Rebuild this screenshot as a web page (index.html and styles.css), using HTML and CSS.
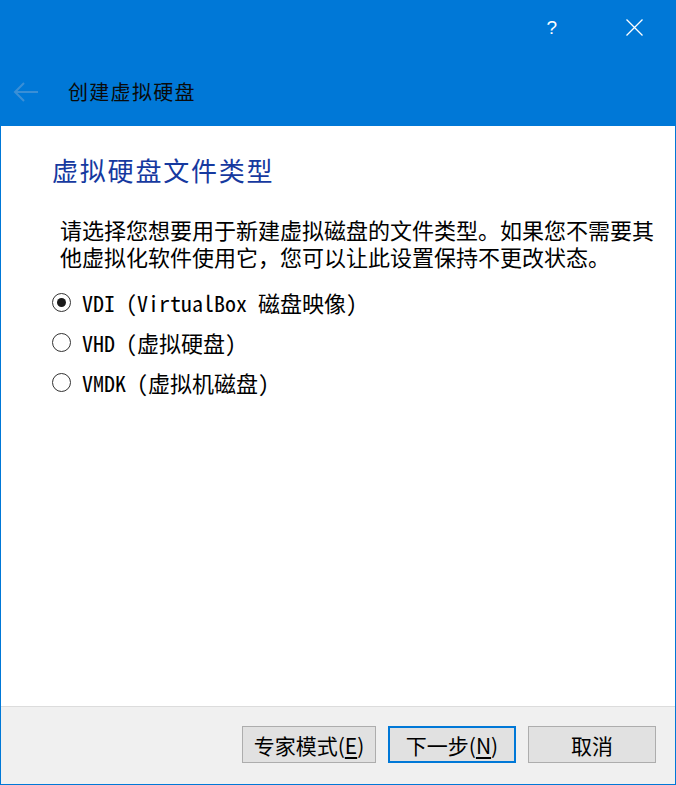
FILE: index.html
```html
<!DOCTYPE html>
<html lang="zh-CN">
<head>
  <meta charset="UTF-8" />
  <title>创建虚拟硬盘</title>
  <link rel="stylesheet" href="styles.css">
</head>
<body>
  <div class="window">
    <div class="titlebar">
      <span class="help">?</span>
      <svg class="close" width="17" height="17" viewBox="0 0 17 17">
        <path d="M0.5 0.5 L16.5 16.5 M16.5 0.5 L0.5 16.5" stroke="#fff" stroke-width="1.3" fill="none" />
      </svg>
    </div>

    <div class="wizard-head">
      <svg class="back" width="26" height="20" viewBox="0 0 26 20">
        <path d="M25 10 H2 M11 1 L2 10 L11 19" stroke="#3a8fd6" stroke-width="2" fill="none" />
      </svg>
      <h1>创建虚拟硬盘</h1>
    </div>

    <main class="content">
      <h2>虚拟硬盘文件类型</h2>
      <p>请选择您想要用于新建虚拟磁盘的文件类型。如果您不需要其他虚拟化软件使用它，您可以让此设置保持不更改状态。</p>
      <ul class="options">
        <li><span class="radio checked"></span>VDI (VirtualBox 磁盘映像)</li>
        <li><span class="radio"></span>VHD (虚拟硬盘)</li>
        <li><span class="radio"></span>VMDK (虚拟机磁盘)</li>
      </ul>
    </main>

    <footer class="buttons">
      <button class="expert">专家模式(<u>E</u>)</button>
      <button class="default">下一步(<u>N</u>)</button>
      <button>取消</button>
    </footer>
  </div>
</body>
</html>
```

FILE: styles.css
```css
* { box-sizing: border-box; margin: 0; padding: 0; }
html, body { width: 676px; height: 785px; overflow: hidden; }
body { font-family: "Noto Sans Mono CJK SC", "Noto Sans CJK SC", sans-serif; background: #fff; color: #000; }

.window { width: 676px; height: 785px; display: flex; flex-direction: column; border: 1px solid #0078d7; border-top: none; }

.titlebar { height: 55px; background: #0078d7; display: flex; justify-content: flex-end; align-items: center; padding-right: 33px; gap: 69px; margin: 0 -1px; }
.help { color: #fff; font-family: "Liberation Sans", sans-serif; font-size: 19px; line-height: 1; }
.close { display: block; }

.wizard-head { height: 71px; background: #0078d7; display: flex; align-items: center; padding: 2px 0 0 13px; margin: 0 -1px; }
.back { display: block; margin-right: 29px; }
.wizard-head h1 { font-family: "Noto Sans CJK SC", sans-serif; font-weight: normal; font-size: 20px; letter-spacing: 1.3px; color: #0a0a0a; }

.content { flex: 1; padding: 26px 0 0 51px; }
.content h2 { font-family: "Noto Sans CJK SC", sans-serif; font-weight: normal; font-size: 26px; line-height: 36px; letter-spacing: 1.8px; color: #16399f; }
.content p { font-size: 22px; line-height: 27px; margin: 28px 0 0 8px; width: 600px; }

.options { list-style: none; margin-top: 12px; }
.options li { height: 40px; display: flex; align-items: center; font-size: 22px; }
.radio { width: 19px; height: 19px; border: 1px solid #333; border-radius: 50%; margin-right: 11px; display: flex; align-items: center; justify-content: center; }
.radio.checked::after { content: ""; width: 9px; height: 9px; border-radius: 50%; background: #1a1a1a; }

.buttons { height: 78px; background: #f0f0f0; border-top: 1px solid #dcdcdc; display: flex; justify-content: flex-end; align-items: flex-start; gap: 12px; padding: 19px 19px 0 0; }
.buttons button { width: 128px; height: 37px; background: #e1e1e1; border: 1px solid #adadad; font-family: "Noto Sans CJK SC", sans-serif; font-size: 21px; color: #000; }
.buttons button.expert { width: 134px; }
.buttons button.default { border: 2px solid #0078d7; }
.buttons u { text-underline-offset: 3px; }
```
